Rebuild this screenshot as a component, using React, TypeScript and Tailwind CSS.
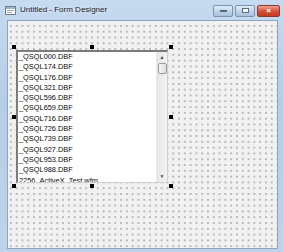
import React from 'react';

const files = [
  '_QSQL000.DBF',
  '_QSQL174.DBF',
  '_QSQL176.DBF',
  '_QSQL321.DBF',
  '_QSQL596.DBF',
  '_QSQL659.DBF',
  '_QSQL716.DBF',
  '_QSQL726.DBF',
  '_QSQL739.DBF',
  '_QSQL927.DBF',
  '_QSQL953.DBF',
  '_QSQL988.DBF',
  '2256_ActiveX_Test.wfm',
];

// selection handles around the listbox (client coords)
const handles = [
  'left-[4px] top-[24px]',
  'left-[82px] top-[24px]',
  'left-[161px] top-[24px]',
  'left-[4px] top-[94px]',
  'left-[161px] top-[94px]',
  'left-[4px] top-[163px]',
  'left-[82px] top-[163px]',
  'left-[161px] top-[163px]',
];

const TitleIcon = () => (
  <svg width="11" height="9" viewBox="0 0 11 9" className="shrink-0">
    <rect x="0.5" y="0.5" width="10" height="8" fill="#fff" stroke="#6b7f99" />
    <rect x="1" y="1" width="9" height="2" fill="#9db7d8" />
    <line x1="2" y1="4.5" x2="9" y2="4.5" stroke="#a6a6a6" />
    <line x1="2" y1="6.5" x2="7" y2="6.5" stroke="#a6a6a6" />
  </svg>
);

const App: React.FC = () => {
  return (
    <div className="w-[283px] h-[252px] bg-[linear-gradient(#c6daf0,#b6cde8_40%,#bed3ea)] flex flex-col font-['Liberation_Sans',sans-serif] overflow-hidden">
      <div className="h-[20px] flex items-center pl-[5px] pr-[3px] shrink-0">
        <TitleIcon />
        <span className="ml-[4px] text-[8px] text-[#151515] [text-shadow:0_0_3px_#ffffff]">Untitled - Form Designer</span>
        <div className="ml-auto flex items-start gap-[2px] pt-[1px]">
          <div className="w-[20px] h-[12px] rounded-[2px] border border-[#7b93b3] bg-[linear-gradient(#e4edf7,#c3d4e8_50%,#a9c0dc)] flex items-center justify-center">
            <div className="w-[7px] h-[2px] bg-white border-[0.5px] border-[#566b8a]" />
          </div>
          <div className="w-[20px] h-[12px] rounded-[2px] border border-[#7b93b3] bg-[linear-gradient(#e4edf7,#c3d4e8_50%,#a9c0dc)] flex items-center justify-center">
            <div className="w-[7px] h-[5px] bg-white border border-[#566b8a]" />
          </div>
          <div className="w-[23px] h-[12px] rounded-[2px] border border-[#8a3a2c] bg-[linear-gradient(#eea08f,#d6543c_50%,#c2381f)] flex items-center justify-center">
            <span className="text-[8px] leading-none font-bold text-white">×</span>
          </div>
        </div>
      </div>
      <div className="flex-1 ml-[7px] mr-[5px] mb-[3px] border border-[#8ea5c2] bg-[#f1f1f1] relative overflow-hidden">
        <div className="absolute inset-0 bg-[radial-gradient(#a3a3a3_0.6px,transparent_0.9px)] bg-[size:5.8px_5.8px] bg-[position:0px_2px]" />
        <div className="absolute left-[8px] top-[29px] w-[152px] h-[133px] bg-white border-t-2 border-l-2 border-[#7c7c7c] border-r border-b border-r-[#cfcfcf] border-b-[#cfcfcf] flex overflow-hidden">
          <div className="flex-1 pl-[1px] pt-[0px] text-[7.4px] text-[#0a0a0a] leading-[10.3px]">
            {files.map((f) => (
              <div key={f} className="h-[10.3px] whitespace-nowrap">
                {f}
              </div>
            ))}
          </div>
          <div className="w-[11px] bg-[linear-gradient(90deg,#e6e6e6,#f2f2f2)] border-l border-[#e8e8e8] flex flex-col items-center">
            <div className="h-[11px] flex items-center justify-center text-[5px] text-[#4a4a4a] leading-none">▲</div>
            <div className="w-[9px] h-[11px] rounded-[2px] border border-[#9a9a9a] bg-[linear-gradient(90deg,#f6f6f6,#dedede)]" />
            <div className="flex-1" />
            <div className="h-[11px] flex items-center justify-center text-[5px] text-[#4a4a4a] leading-none">▼</div>
          </div>
        </div>
        {handles.map((h) => (
          <div key={h} className={`absolute w-[4px] h-[4px] bg-black ${h}`} />
        ))}
      </div>
    </div>
  );
};

export default App;
